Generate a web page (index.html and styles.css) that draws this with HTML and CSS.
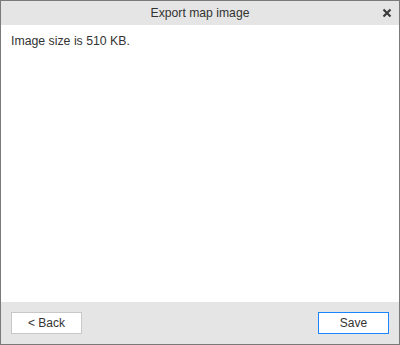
FILE: index.html
```html
<!DOCTYPE html>
<html>
<head>
<meta charset="utf-8">
<link rel="stylesheet" href="styles.css">
</head>
<body>
<div class="dialog">
  <div class="titlebar">
    <span class="title">Export map image</span>
    <span class="close">
      <svg width="10" height="10" viewBox="0 0 10 10"><path d="M1.5 1.5 L8.5 8.5 M8.5 1.5 L1.5 8.5" stroke="#3c3c3c" stroke-width="2.2" stroke-linecap="butt"/></svg>
    </span>
  </div>
  <div class="content">
    <p class="message">Image size is 510 KB.</p>
  </div>
  <div class="footer">
    <button class="btn">&lt; Back</button>
    <button class="btn primary">Save</button>
  </div>
</div>
</body>
</html>
```
FILE: styles.css
```css
html, body {
  margin: 0;
  padding: 0;
  background: #ffffff;
}
.dialog {
  width: 400px;
  height: 345px;
  box-sizing: border-box;
  border: 1px solid #7a7a7a;
  display: flex;
  flex-direction: column;
  font-family: "Liberation Sans", Arial, sans-serif;
  font-size: 12px;
  color: #333333;
}
.titlebar {
  height: 24px;
  flex: none;
  background: #e5e5e5;
  position: relative;
  display: flex;
  align-items: center;
  justify-content: center;
}
.title {
  font-size: 12.2px;
  color: #333333;
}
.close {
  position: absolute;
  right: 7px;
  top: 7px;
  width: 10px;
  height: 10px;
  display: block;
}
.close svg { display: block; }
.content {
  flex: 1;
  background: #ffffff;
  padding: 9px 10px;
}
.message {
  margin: 0;
  font-size: 12.3px;
  line-height: 14px;
}
.footer {
  height: 42px;
  flex: none;
  background: #e5e5e5;
  box-sizing: border-box;
  padding: 10px 10px 10px 10px;
  display: flex;
  justify-content: space-between;
  align-items: flex-start;
}
.btn {
  width: 71px;
  height: 22px;
  box-sizing: border-box;
  margin: 0;
  padding: 0;
  background: #ffffff;
  border: 1px solid #c8c8c8;
  font-family: "Liberation Sans", Arial, sans-serif;
  font-size: 12px;
  color: #333333;
}
.btn.primary {
  border-color: #1a85ff;
}
```
